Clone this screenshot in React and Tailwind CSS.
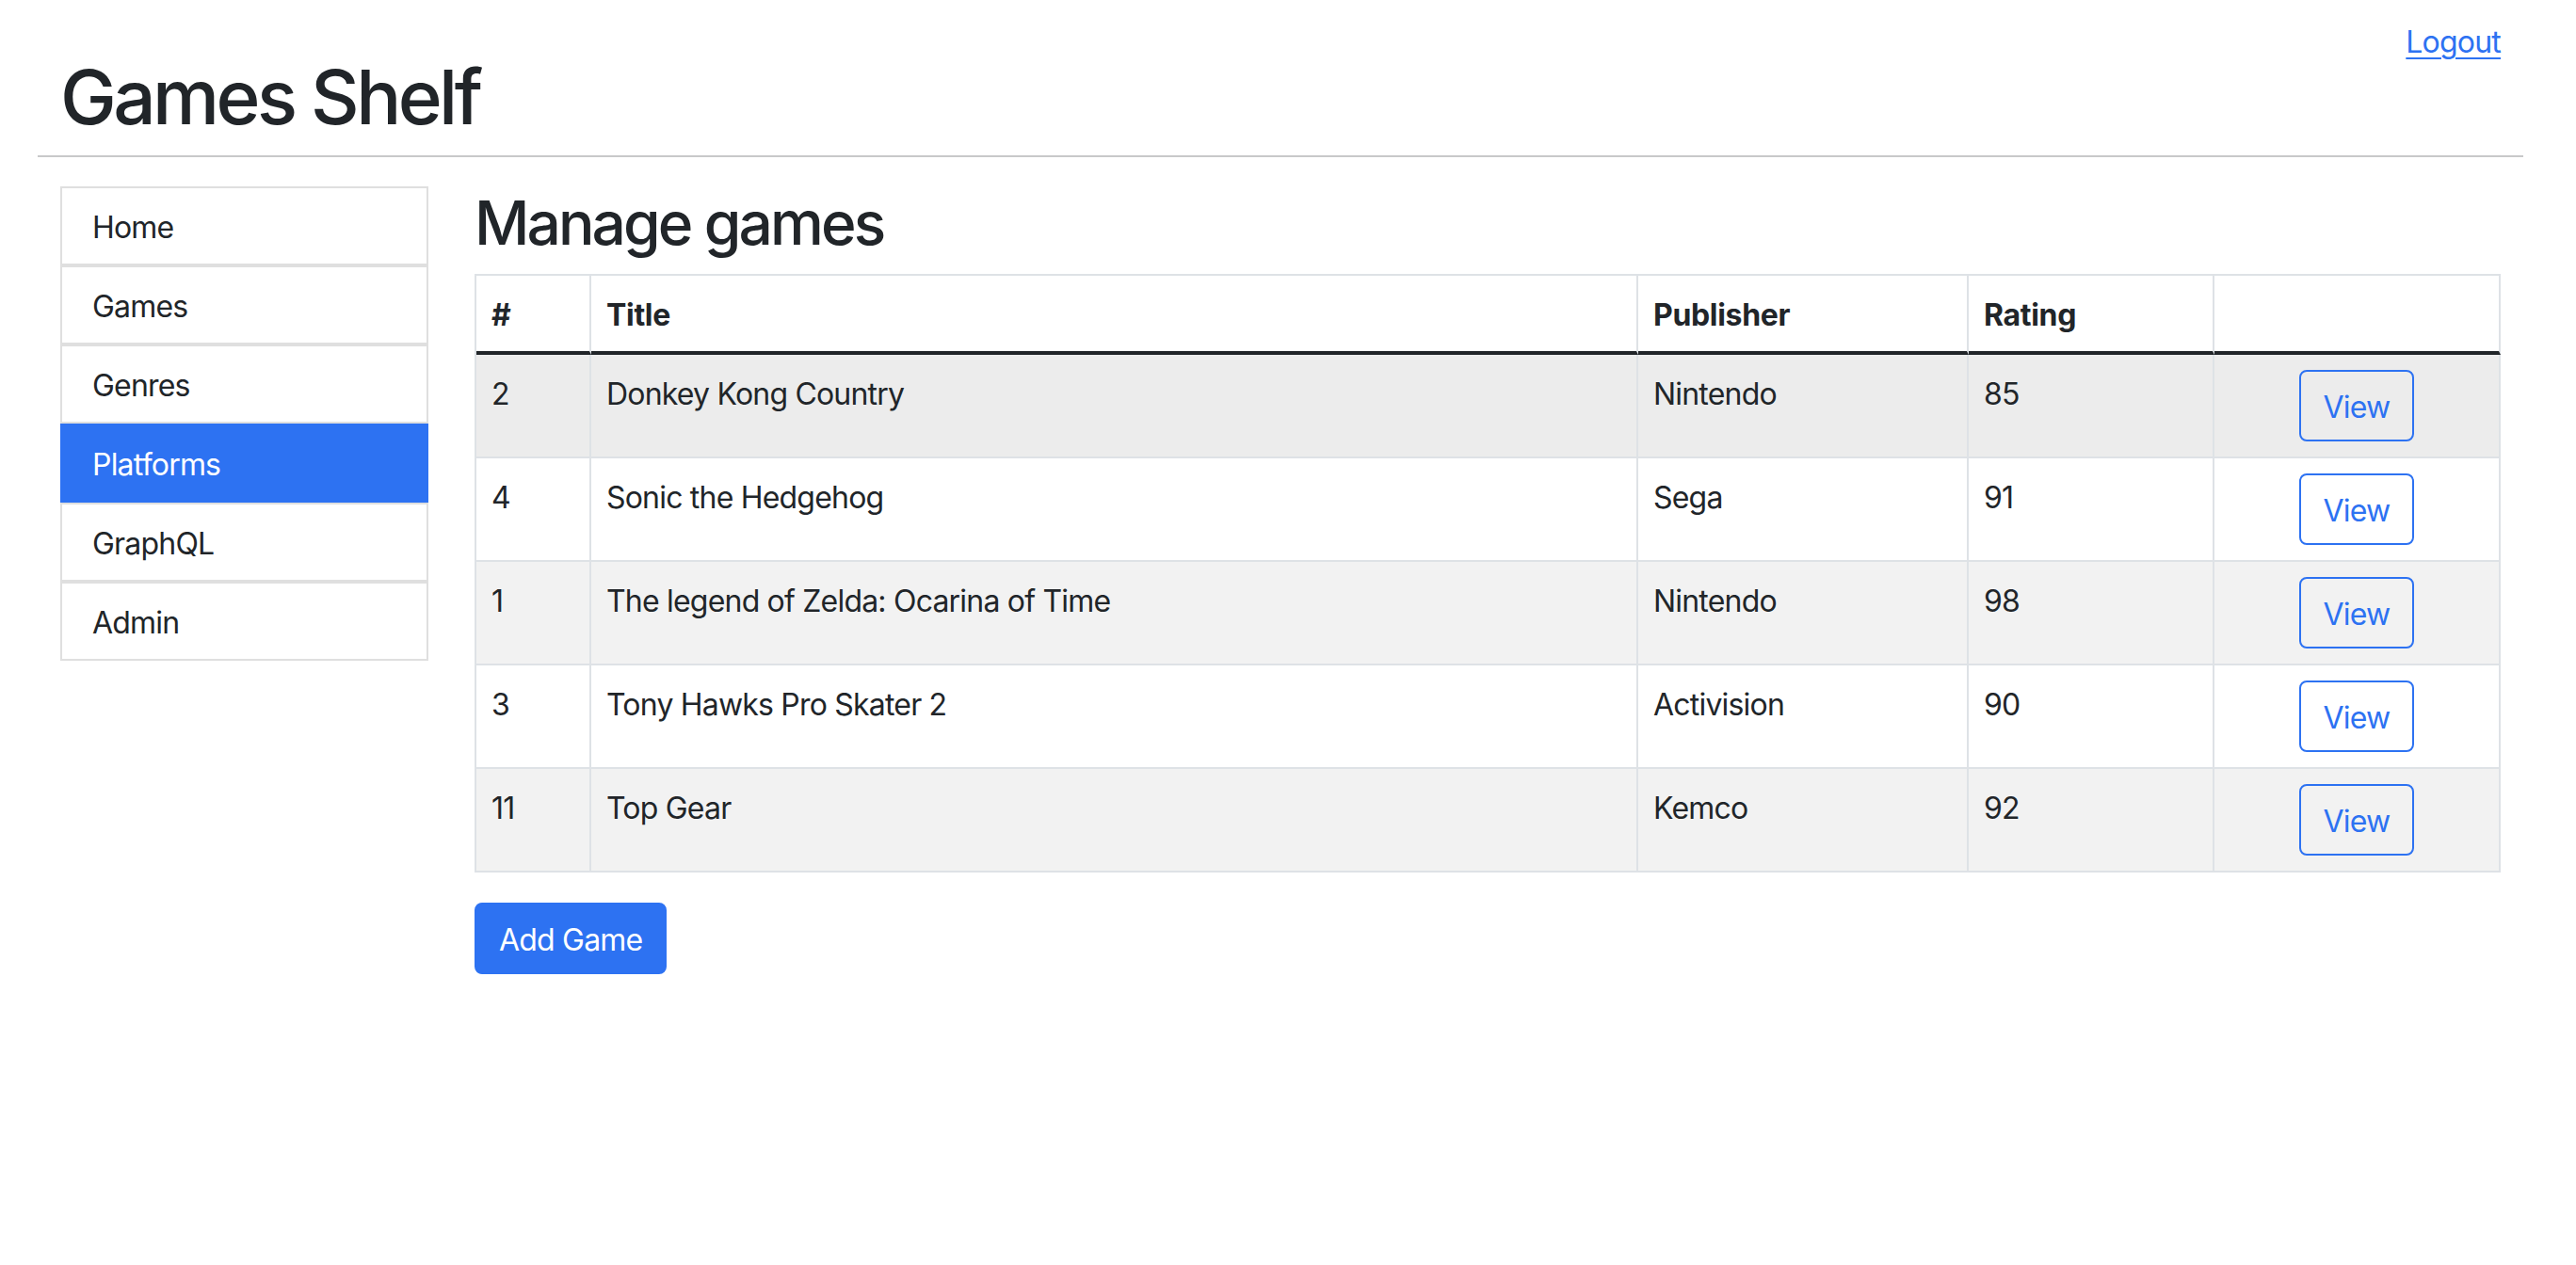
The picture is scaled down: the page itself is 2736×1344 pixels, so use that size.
import React from "react";

const games = [
  { id: 2, title: "Donkey Kong Country", publisher: "Nintendo", rating: 85, bg: "bg-[#ececec]" },
  { id: 4, title: "Sonic the Hedgehog", publisher: "Sega", rating: 91, bg: "bg-white" },
  { id: 1, title: "The legend of Zelda: Ocarina of Time", publisher: "Nintendo", rating: 98, bg: "bg-[#f2f2f2]" },
  { id: 3, title: "Tony Hawks Pro Skater 2", publisher: "Activision", rating: 90, bg: "bg-white" },
  { id: 11, title: "Top Gear", publisher: "Kemco", rating: 92, bg: "bg-[#f2f2f2]" },
];

const nav = ["Home", "Games", "Genres", "Platforms", "GraphQL", "Admin"];

const td = "pt-[18px] pb-[14px] px-[16px] border-r-2 border-b-2 border-[#dee2e6] align-top";

export default function App() {
  return (
    <div
      className="min-h-screen bg-white text-[#212529] text-[32px] leading-[48px] tracking-[-0.025em] pl-[40px] pr-[56px]"
      style={{ fontFamily: "Inter, 'Noto Sans', sans-serif" }}
    >
      <header className="flex justify-between items-start px-[24px]">
        <h1 className="mt-[55px] text-[80px] leading-[96px] font-medium tracking-[-0.045em]">Games Shelf</h1>
        <a
          href="#"
          className="mt-[21px] text-[#2d72f2] underline decoration-[2px] underline-offset-[5px]"
        >
          Logout
        </a>
      </header>
      <div className="mt-[14px] border-t-2 border-[#c8c9ca]" />
      <div className="mt-[31px] flex gap-[49px] px-[24px]">
        <nav className="w-[391px] flex flex-col shrink-0">
          {nav.map((item) => {
            const active = item === "Platforms";
            return (
              <div
                key={item}
                className={
                  active
                    ? "border-2 border-[#2d72f2] bg-[#2d72f2] text-white px-[32px] pt-[18px] pb-[14px]"
                    : "border-2 border-[#dfdfdf] bg-white px-[32px] pt-[18px] pb-[14px]"
                }
              >
                {item}
              </div>
            );
          })}
        </nav>
        <main className="flex-1">
          <h2 className="text-[64px] leading-[77px] font-medium mb-[16px] tracking-[-0.045em]">Manage games</h2>
          <table className="w-full table-fixed border-separate border-spacing-0 border-l-2 border-t-2 border-[#dee2e6]">
            <colgroup>
              <col className="w-[122px]" />
              <col className="w-[1112px]" />
              <col className="w-[351px]" />
              <col className="w-[261px]" />
              <col />
            </colgroup>
            <thead>
              <tr>
                {["#", "Title", "Publisher", "Rating", ""].map((h, i) => (
                  <th
                    key={i}
                    className="text-left font-bold tracking-[-0.01em] pt-[18px] pb-[14px] px-[16px] border-r-2 border-r-[#dee2e6] border-b-4 border-b-[#212529] align-top"
                  >
                    {h}
                  </th>
                ))}
              </tr>
            </thead>
            <tbody>
              {games.map((g) => (
                <tr key={g.id} className={g.bg}>
                  <td className={td}>{g.id}</td>
                  <td className={td}>{g.title}</td>
                  <td className={td}>{g.publisher}</td>
                  <td className={td}>{g.rating}</td>
                  <td className="p-[16px] border-r-2 border-b-2 border-[#dee2e6] align-top text-center">
                    <button className="inline-block border-2 border-[#2d72f2] text-[#2d72f2] rounded-[8px] px-[24px] pt-[14px] pb-[10px] leading-[48px] bg-transparent tracking-[-0.025em]">
                      View
                    </button>
                  </td>
                </tr>
              ))}
            </tbody>
          </table>
          <button className="mt-[32px] border-2 border-[#2d72f2] bg-[#2d72f2] text-white rounded-[8px] px-[24px] pt-[14px] pb-[10px] leading-[48px] tracking-[-0.025em]">
            Add Game
          </button>
        </main>
      </div>
    </div>
  );
}
